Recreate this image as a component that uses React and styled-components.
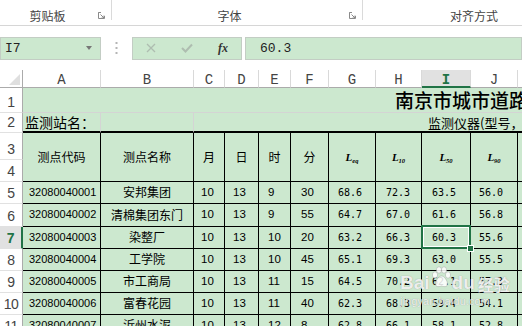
import React from 'react'
import styled, { createGlobalStyle } from 'styled-components'

const GREEN = '#cce8cf'
const EXCEL = '#217346'

const Global = createGlobalStyle`
  html, body { margin: 0; padding: 0; background: #fff; }
  body { font-family: "Noto Sans CJK SC", sans-serif; overflow: hidden; }
`

const Page = styled.div`
  position: relative;
  width: 522px;
  height: 326px;
  overflow: hidden;
  background: #fff;
`

// ribbon group labels
const Ribbon = styled.div`
  display: flex;
  height: 25px;
  border-bottom: 1px solid #d6d6d6;
`

const Group = styled.div`
  flex: none;
  width: ${p => p.$w}px;
  display: flex;
  align-items: center;
  padding-top: 6px;
  box-sizing: border-box;
`

const GroupLabel = styled.div`
  flex: 1;
  text-align: center;
  padding-right: ${p => p.$pr || 0}px;
  font-size: 12px;
  line-height: 1;
  color: #444;
`

const Launcher = styled.svg`
  flex: none;
  width: 7px;
  height: 7px;
  margin: 0 6px 0 0;
  align-self: center;
`

const Divider = styled.div`
  flex: none;
  width: 1px;
  height: 20px;
  background: #dadada;
`

// formula bar
const FormulaBar = styled.div`
  display: flex;
  align-items: center;
  height: 44px;
`

const Box = styled.div`
  flex: ${p => p.$grow ? 1 : 'none'};
  width: ${p => p.$w ? `${p.$w}px` : 'auto'};
  height: 23px;
  margin-left: ${p => p.$ml || 0}px;
  box-sizing: border-box;
  border: 1px solid #c3cdc4;
  background: ${GREEN};
  display: flex;
  align-items: center;
`

const NameText = styled.span`
  flex: 1;
  padding-left: 4px;
  font-family: "Liberation Mono", monospace;
  font-size: 13px;
  color: #222;
`

const DropArrow = styled.span`
  width: 0;
  height: 0;
  margin-right: 8px;
  border-left: 3.5px solid transparent;
  border-right: 3.5px solid transparent;
  border-top: 4px solid #777;
`

const Dots = styled.div`
  flex: none;
  width: 31px;
  display: flex;
  justify-content: center;
`

const FxSlot = styled.div`
  flex: none;
  width: 36px;
  display: flex;
  justify-content: center;
  align-items: center;
`

const FxText = styled.span`
  font-family: "Liberation Serif", serif;
  font-style: italic;
  font-weight: 700;
  font-size: 12px;
  color: #333;
`

const FormulaText = styled.span`
  padding-left: 14px;
  font-family: "Liberation Mono", monospace;
  font-size: 13px;
  color: #222;
`

// sheet grid
const Sheet = styled.div`
  display: grid;
  grid-template-columns: 23px 78px 93px 31px 34px 32px 38px 47px 46px 49px 47px 60px;
  grid-template-rows: 18px 25px 20px 27px 22px 22px 23px 22px 22px 22px 22px 22px;
  width: max-content;
`

const Corner = styled.div`
  display: flex;
  align-items: flex-end;
  justify-content: flex-end;
  padding: 0 2px 2px 0;
  box-sizing: border-box;
  border-right: 1px solid #ababab;
  border-bottom: 1px solid #ababab;
`

const ColHead = styled.div`
  display: flex;
  align-items: center;
  justify-content: center;
  padding-top: 3px;
  box-sizing: border-box;
  background: ${p => p.$active ? '#e1e1e1' : '#fff'};
  border-right: 1px solid #d9d9d9;
  border-bottom: ${p => p.$active ? `2px solid ${EXCEL}` : '1px solid #ababab'};
  font-family: "Liberation Mono", monospace;
  font-size: 14px;
  line-height: 1;
  font-weight: ${p => p.$active ? 700 : 400};
  color: ${p => p.$active ? EXCEL : '#444'};
`

const RowHead = styled.div`
  display: flex;
  align-items: flex-end;
  justify-content: center;
  padding-bottom: 3px;
  box-sizing: border-box;
  background: ${p => p.$active ? '#e1e1e1' : '#fff'};
  border-right: ${p => p.$active ? `2px solid ${EXCEL}` : '1px solid #ababab'};
  border-bottom: 1px solid #e1e1e1;
  font-family: "Liberation Sans", sans-serif;
  font-size: 14px;
  line-height: 1;
  letter-spacing: -0.5px;
  font-weight: ${p => p.$active ? 700 : 400};
  color: ${p => p.$active ? EXCEL : '#444'};
`

const fonts = {
  title: '500 19px "Noto Sans CJK SC", sans-serif',
  label: '14px "Noto Sans CJK SC", sans-serif',
  sub: '13px "Noto Sans CJK SC", sans-serif',
  cjk: '12px "Noto Sans CJK SC", sans-serif',
  code: '11px "Liberation Sans", sans-serif',
  int: '11.5px "Liberation Sans", sans-serif',
  dec: '10px "DejaVu Sans Mono", monospace',
}

const Cell = styled.div`
  grid-column: span ${p => p.$span || 1};
  grid-row: span ${p => p.$rows || 1};
  position: relative;
  z-index: ${p => p.$selected ? 2 : 'auto'};
  display: flex;
  align-items: ${p => p.$bottom ? 'flex-end' : 'center'};
  justify-content: ${p => p.$left ? 'flex-start' : 'center'};
  padding-left: ${p => p.$pad || 0}px;
  box-sizing: border-box;
  min-width: 0;
  white-space: nowrap;
  background: ${GREEN};
  border-right: 1px solid ${p => p.$grid ? '#d4d4d4' : '#000'};
  border-bottom: ${p => p.$thick ? '2px solid #000' : `1px solid ${p.$grid ? '#d4d4d4' : '#000'}`};
  font: ${p => fonts[p.$kind || 'cjk']};
  line-height: 1.2;
  color: #000;

  &::before {
    content: ${p => p.$selected ? '""' : 'none'};
    position: absolute;
    top: -2px;
    left: -1px;
    right: -1px;
    bottom: -1px;
    border: 2px solid ${EXCEL};
    box-shadow: inset 0 0 0 1px #fff;
  }
  &::after {
    content: ${p => p.$selected ? '""' : 'none'};
    position: absolute;
    right: -4px;
    bottom: -4px;
    width: 5px;
    height: 5px;
    background: ${EXCEL};
    border: 1px solid #fff;
  }
`

const LSym = styled.span`
  font-family: "Liberation Serif", serif;
  font-style: italic;
  font-weight: 700;
  font-size: 11px;
  padding-top: 2px;

  sub {
    font-size: 6.5px;
    vertical-align: -2px;
  }
`

const Watermark = styled.div`
  position: absolute;
  left: 400px;
  top: 266px;
  display: flex;
  flex-direction: column;
  color: rgba(255, 255, 255, 0.85);
  text-shadow: 0 0 1px rgba(110, 110, 110, 0.7);
  pointer-events: none;
`

const WmLogo = styled.div`
  display: flex;
  align-items: flex-end;
  font-family: "Liberation Sans", sans-serif;
  font-weight: 700;
  font-size: 19px;
  line-height: 1;
`

const WmCn = styled.span`
  margin-left: 3px;
  font-family: "Noto Sans CJK SC", sans-serif;
  font-size: 16px;
  font-weight: 700;
`

const WmUrl = styled.div`
  margin-top: 3px;
  font-family: "Liberation Sans", sans-serif;
  font-size: 10.5px;
  letter-spacing: 0.3px;
`

const cols = ['A', 'B', 'C', 'D', 'E', 'F', 'G', 'H', 'I', 'J', 'K']
const pads = [7, 8, 9, 10, 9, 10, 10, 8]

const data = [
  ['32080040001', '安邦集团', '10', '13', '9', '30', '68.6', '72.3', '63.5', '56.0'],
  ['32080040002', '清棉集团东门', '10', '13', '9', '55', '64.7', '67.0', '61.6', '56.8'],
  ['32080040003', '染整厂', '10', '13', '10', '20', '63.2', '66.3', '60.3', '55.6'],
  ['32080040004', '工学院', '10', '13', '10', '45', '65.1', '69.3', '63.0', '55.5'],
  ['32080040005', '市工商局', '10', '13', '11', '15', '64.5', '70.2', '62.1', '57.3'],
  ['32080040006', '富春花园', '10', '13', '11', '40', '62.3', '68.3', '59.4', '54.1'],
  ['32080040007', '沂州水泥', '10', '13', '12', '8', '62.8', '66.1', '58.1', '52.8'],
]

const LaunchIcon = () => (
  <Launcher viewBox="0 0 7 7">
    <path d="M0.5 3V0.5H3 M0.5 0.5V6.5H6.5V4" fill="none" stroke="#8a8a8a" strokeWidth="1" />
    <path d="M2.5 2.5L6 6 M6 3.5V6H3.5" fill="none" stroke="#8a8a8a" strokeWidth="1" />
  </Launcher>
)

const Paw = () => (
  <svg width="22" height="22" viewBox="0 0 22 22" style={{ marginBottom: 4 }}>
    <g fill="rgba(255,255,255,0.85)" stroke="rgba(120,120,120,0.5)" strokeWidth="0.6">
      <ellipse cx="5" cy="9" rx="2.6" ry="3.2" />
      <ellipse cx="9" cy="4" rx="2.6" ry="3.2" />
      <ellipse cx="14" cy="4" rx="2.6" ry="3.2" />
      <ellipse cx="18" cy="9" rx="2.6" ry="3.2" />
      <path d="M11.5 10c3 0 6 5 6 8s-3 3-6 2c-3 1-6 1-6-2s3-8 6-8z" />
    </g>
  </svg>
)

export default function App() {
  return (
    <Page>
      <Global />
      <Ribbon>
        <Group $w={111}>
          <GroupLabel $pr={3}>剪贴板</GroupLabel>
          <LaunchIcon />
        </Group>
        <Divider />
        <Group $w={250}>
          <GroupLabel $pr={2}>字体</GroupLabel>
          <LaunchIcon />
        </Group>
        <Divider />
        <Group $w={222}>
          <GroupLabel>对齐方式</GroupLabel>
        </Group>
      </Ribbon>

      <FormulaBar>
        <Box $w={101}>
          <NameText>I7</NameText>
          <DropArrow />
        </Box>
        <Dots>
          <svg width="3" height="14" viewBox="0 0 3 14">
            <g fill="#b5b5b5">
              <rect x="0.5" y="1" width="2" height="2" />
              <rect x="0.5" y="6" width="2" height="2" />
              <rect x="0.5" y="11" width="2" height="2" />
            </g>
          </svg>
        </Dots>
        <Box $w={110}>
          <FxSlot>
            <svg width="10" height="10" viewBox="0 0 10 10">
              <path d="M1 1L9 9M9 1L1 9" stroke="#aebdb0" strokeWidth="1.3" />
            </svg>
          </FxSlot>
          <FxSlot>
            <svg width="12" height="10" viewBox="0 0 12 10">
              <path d="M1 5L4.5 8.5L11 1.5" fill="none" stroke="#aebdb0" strokeWidth="2" />
            </svg>
          </FxSlot>
          <FxSlot>
            <FxText>fx</FxText>
          </FxSlot>
        </Box>
        <Box $grow $ml={3}>
          <FormulaText>60.3</FormulaText>
        </Box>
      </FormulaBar>

      <Sheet>
        <Corner>
          <svg width="11" height="11" viewBox="0 0 11 11">
            <polygon points="11,0 11,11 0,11" fill="#dfdfdf" />
          </svg>
        </Corner>
        {cols.map(c => (
          <ColHead key={c} $active={c === 'I'}>{c}</ColHead>
        ))}

        <RowHead>1</RowHead>
        <Cell $span={11} $grid $left $pad={372} $kind="title">南京市城市道路交通噪声监测记录表</Cell>

        <RowHead>2</RowHead>
        <Cell $grid $thick $left $bottom $pad={2} $kind="label">监测站名：</Cell>
        <Cell $grid $thick />
        <Cell $span={9} $grid $thick $left $bottom $pad={234} $kind="sub">监测仪器(型号，编号)：</Cell>

        <RowHead>3</RowHead>
        <Cell $rows={2}>测点代码</Cell>
        <Cell $rows={2}>测点名称</Cell>
        <Cell $rows={2}>月</Cell>
        <Cell $rows={2}>日</Cell>
        <Cell $rows={2}>时</Cell>
        <Cell $rows={2}>分</Cell>
        <Cell $rows={2}><LSym>L<sub>eq</sub></LSym></Cell>
        <Cell $rows={2}><LSym>L<sub>10</sub></LSym></Cell>
        <Cell $rows={2}><LSym>L<sub>50</sub></LSym></Cell>
        <Cell $rows={2}><LSym>L<sub>90</sub></LSym></Cell>
        <Cell $rows={2} />
        <RowHead>4</RowHead>

        {data.map((r, i) => {
          const n = i + 5
          return (
            <React.Fragment key={n}>
              <RowHead $active={n === 7}>{n}</RowHead>
              <Cell $left $pad={6} $kind="code">{r[0]}</Cell>
              <Cell>{r[1]}</Cell>
              {r.slice(2).map((v, j) => (
                <Cell
                  key={j}
                  $left
                  $pad={pads[j]}
                  $kind={j < 4 ? 'int' : 'dec'}
                  $selected={n === 7 && j === 6}
                >
                  {v}
                </Cell>
              ))}
              <Cell />
            </React.Fragment>
          )
        })}
      </Sheet>

      <Watermark>
        <WmLogo>
          Bai<Paw />du<WmCn>经验</WmCn>
        </WmLogo>
        <WmUrl>jingyan.baidu.com</WmUrl>
      </Watermark>
    </Page>
  )
}
